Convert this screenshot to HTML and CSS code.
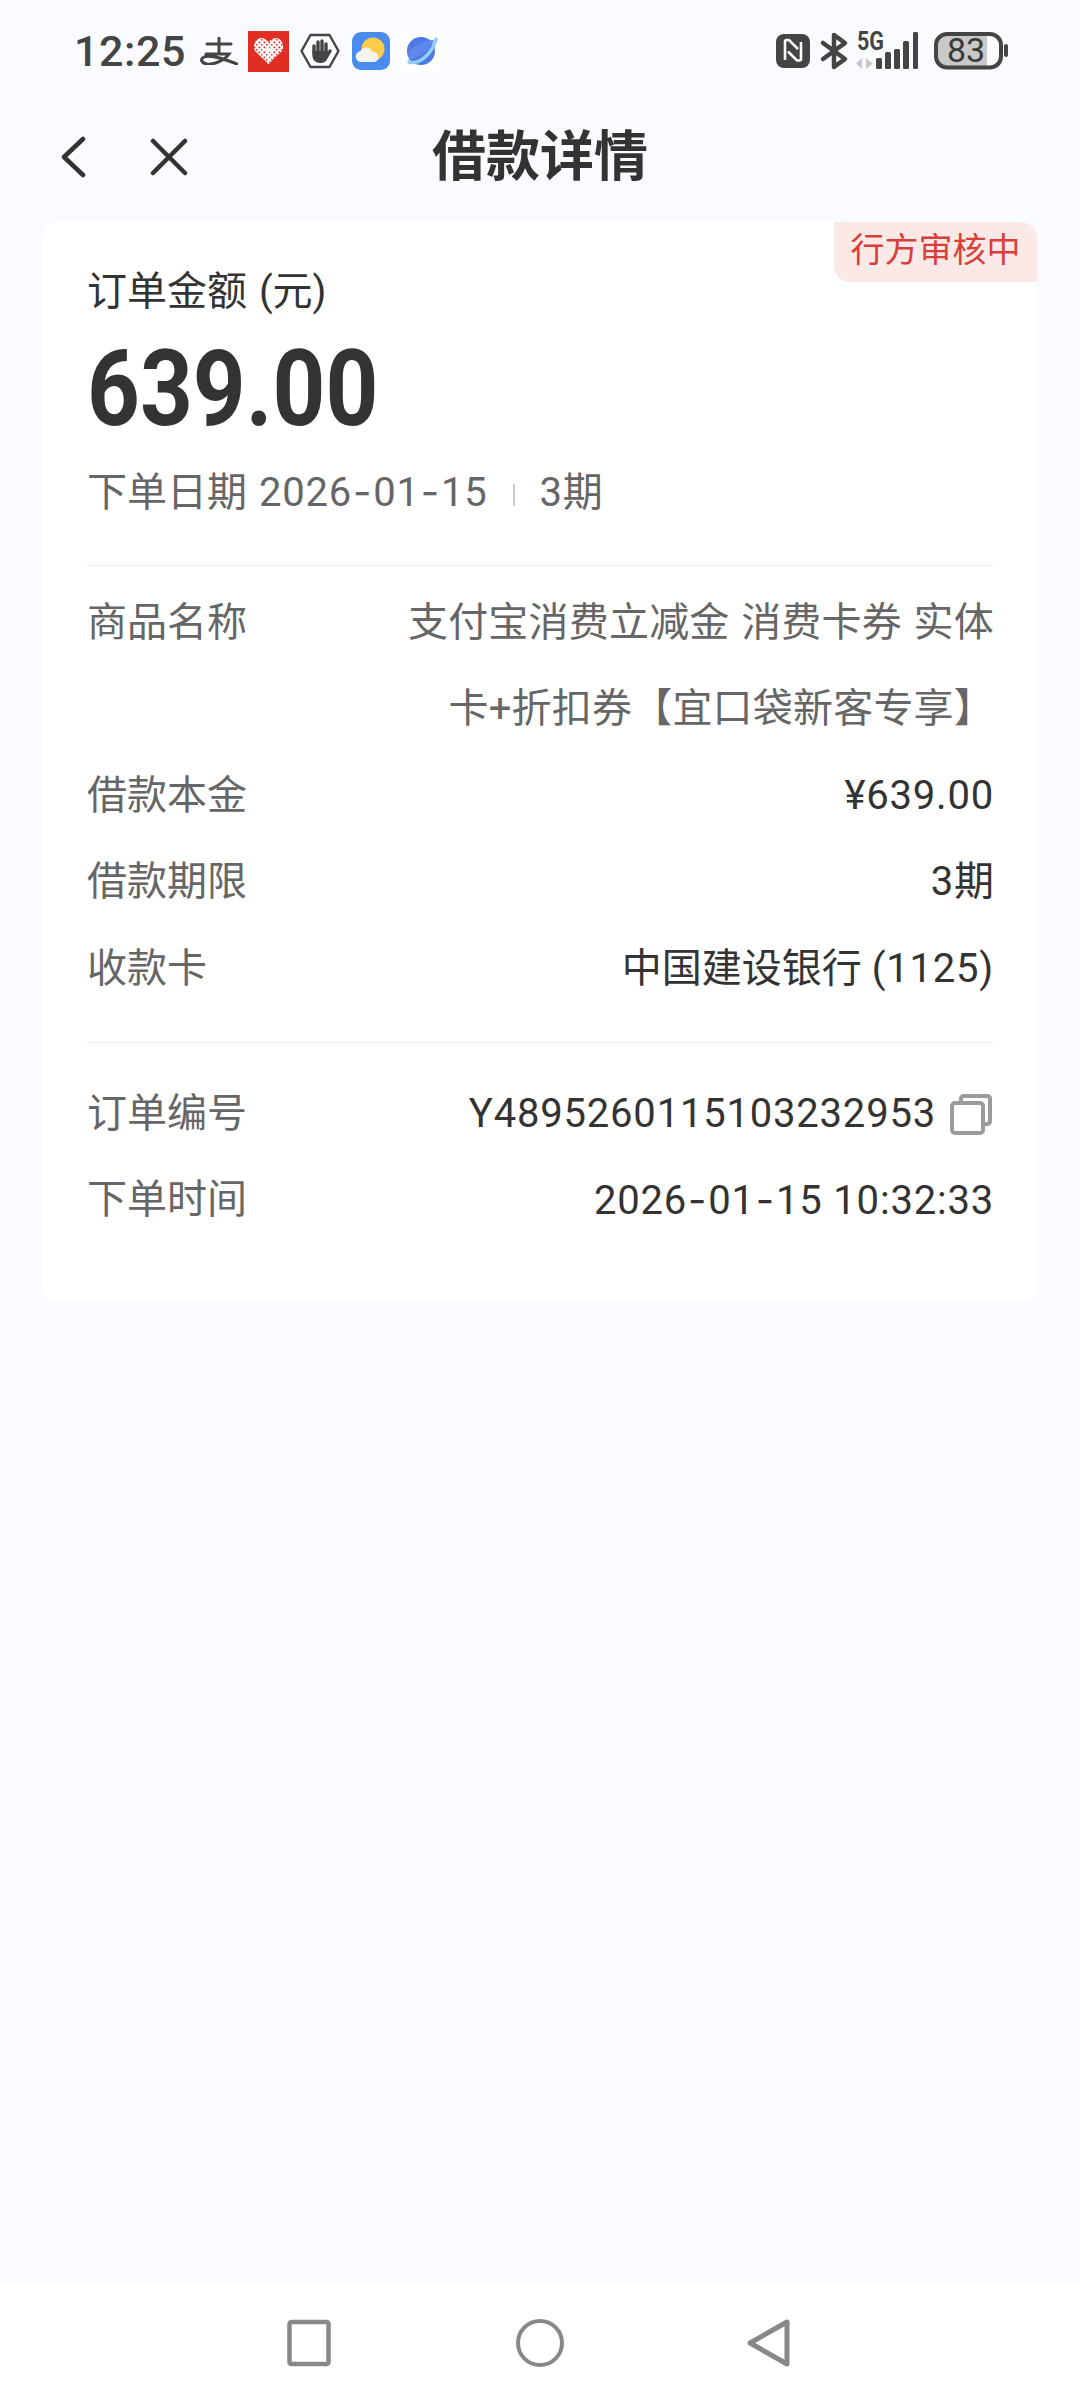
FILE: index.html
```html
<!DOCTYPE html>
<html lang="zh-CN">
<head>
<meta charset="utf-8">
<title>借款详情</title>
<link rel="stylesheet" href="styles.css">
</head>
<body>
<div class="phone">
  <div class="status">
    <div class="status-left">
      <span class="time">12:25</span>
      <svg class="ic ic-ali" viewBox="0 0 38 28" fill="none" stroke="#444" stroke-width="3" stroke-linecap="round"><path d="M7 7H31M19 1V17M6 17H29C25 23 14 28 7 27C1 26 0 22 4 20C10 17 24 22 37 27"/></svg>
      <svg class="ic ic-pdd" viewBox="0 0 41 41"><defs><pattern id="dots" width="5" height="5" patternUnits="userSpaceOnUse"><rect width="5" height="5" fill="#fff"/><rect x="0.500" y="0.500" width="1.800" height="1.800" fill="#e02e24"/><rect x="3" y="3" width="1.500" height="1.500" fill="#e02e24"/></pattern></defs><rect width="41" height="41" fill="#e02e24"/><path d="M20.500 33L7 20C4 14 8 7 13 7C16 7 19 9 20.500 11C22 9 25 7 28 7C33 7 37 14 34 20Z" fill="url(#dots)"/><path d="M20.500 14V33M14 19H27" stroke="#fff" stroke-width="1.500"/></svg>
      <svg class="ic ic-hand" viewBox="0 0 40 36"><path d="M1.500 18L10.500 2H29.500L38.500 18L29.500 34H10.500Z" fill="none" stroke="#444" stroke-width="2.400" stroke-linejoin="round"/><path d="M14 21V13M18 20V9M22 20V8M26 21V11M26.500 24L30 18" fill="none" stroke="#444" stroke-width="3.400" stroke-linecap="round"/><path d="M12.500 18H27.500V24C27.500 28 24 30 20 30C16 30 12.500 27 12.500 23Z" fill="#444"/></svg>
      <svg class="ic ic-weather" viewBox="0 0 38 38"><rect width="38" height="38" rx="9" fill="#4a8bf0"/><circle cx="21" cy="17" r="11.500" fill="#f9cc4a"/><path d="M10 30a5.500 5.500 0 0 1 -1.500 -11a6.500 6.500 0 0 1 12 1a5 5 0 0 1 2 10Z" fill="#f5f3ea"/></svg>
      <svg class="ic ic-planet" viewBox="0 0 40 41"><rect width="40" height="41" fill="#fff"/><circle cx="20" cy="20" r="14" fill="#4f79e6"/><path d="M7 21C14 13 24 9 33 9C27 20 17 28 8 29Z" fill="#6088ea"/><path d="M8 31C17 34 31 24 35 8" fill="none" stroke="#8fd0f7" stroke-width="3.500" stroke-linecap="round"/></svg>
    </div>
    <svg class="status-right" viewBox="0 -8 232 54">
      <rect x="0" y="2" width="34" height="34" rx="8" fill="#444"/>
      <path d="M9 28V9.500Q9 8 10.500 8H13L22 17M25 10V27Q25 28.500 23.500 28.500H21L12 19.500" fill="none" stroke="#fbfcff" stroke-width="2.600"/>
      <path d="M47 11L69 27L58 35V3L69 11L47 27" fill="none" stroke="#444" stroke-width="4.500" stroke-linejoin="round" stroke-linecap="round"/>
      <text class="five-g" x="81" y="18" textLength="27" lengthAdjust="spacingAndGlyphs">5G</text>
      <path d="M86 26V37L80 31.500ZM90 26V37L97 31.500Z" fill="#c9c9c9"/>
      <rect x="100" y="26" width="6" height="11" rx="1.500" fill="#444"/>
      <rect x="109" y="20" width="6" height="17" rx="1.500" fill="#444"/>
      <rect x="118" y="17" width="6" height="20" rx="1.500" fill="#444"/>
      <rect x="127" y="9" width="6" height="28" rx="1.500" fill="#444"/>
      <rect x="137" y="0" width="5" height="37" rx="1.500" fill="#444"/>
      <path d="M170 2.500H211V35H170A10 10 0 0 1 160 25V12.500A10 10 0 0 1 170 2.500Z" fill="#c8c8c8"/>
      <rect x="160" y="2" width="65" height="33.500" rx="11" fill="none" stroke="#444" stroke-width="4"/>
      <rect x="228" y="12" width="4" height="13" rx="2" fill="#444"/>
      <text class="batt" x="190" y="30" text-anchor="middle">83</text>
    </svg>
  </div>

  <header class="head">
    <svg class="head-back" viewBox="0 0 25 42" fill="none" stroke="#333" stroke-width="4.500" stroke-linecap="round" stroke-linejoin="round"><path d="M22 3L3 21L22 39"/></svg>
    <svg class="head-close" viewBox="0 0 38 38" fill="none" stroke="#333" stroke-width="4.500" stroke-linecap="round"><path d="M3 3L35 35M35 3L3 35"/></svg>
    <h1 class="title">借款详情</h1>
  </header>

  <main class="main">
    <section class="card">
      <span class="badge">行方审核中</span>
      <div class="amount-label">订单金额 (元)</div>
      <div class="amount">639.00</div>
      <div class="meta">
        <span>下单日期 <span class="num">2026<span class="dash">-</span>01<span class="dash">-</span>15</span></span>
        <i class="meta-sep"></i>
        <span><span class="num">3</span>期</span>
      </div>
      <div class="rows rows-first">
        <div class="row"><span class="k">商品名称</span><span class="v v-wrap">支付宝消费立减金 消费卡券 实体卡+折扣券【宜口袋新客专享】</span></div>
        <div class="row"><span class="k">借款本金</span><span class="v num">¥639.00</span></div>
        <div class="row"><span class="k">借款期限</span><span class="v"><span class="num">3</span>期</span></div>
        <div class="row"><span class="k">收款卡</span><span class="v">中国建设银行 <span class="num">(1125)</span></span></div>
      </div>
      <div class="rows rows-second">
        <div class="row"><span class="k">订单编号</span><span class="v v-copy"><span class="num">Y4895260115103232953</span>
          <svg class="copy" viewBox="0 0 42 41" fill="none" stroke="#9b9b9b" stroke-width="4" stroke-linejoin="round"><path d="M11 7V5Q11 2 14 2H37Q40 2 40 5V27Q40 30 37 30H33"/><rect x="2" y="9" width="31" height="30" rx="3"/></svg></span></div>
        <div class="row"><span class="k">下单时间</span><span class="v num">2026<span class="dash">-</span>01<span class="dash">-</span>15 10:32:33</span></div>
      </div>
    </section>
  </main>

  <nav class="nav">
    <svg class="nav-ic" viewBox="0 0 44 48" fill="none" stroke="#888" stroke-width="4.500" stroke-linejoin="round"><rect x="2.500" y="3" width="39" height="42" rx="2"/></svg>
    <svg class="nav-ic" viewBox="0 0 48 48" fill="none" stroke="#888" stroke-width="4"><circle cx="24" cy="24" r="22"/></svg>
    <svg class="nav-ic" viewBox="0 0 44 48" fill="none" stroke="#888" stroke-width="5" stroke-linejoin="round"><path d="M40 3V45L3 24Z"/></svg>
  </nav>
</div>
</body>
</html>
```

FILE: styles.css
```css
* { box-sizing: border-box; }
html, body { margin: 0; padding: 0; }
body {
  width: 1080px;
  height: 2400px;
  background: #fafbff;
  font-family: Roboto, "Noto Sans CJK SC", sans-serif;
  color: #333;
  overflow: hidden;
}
.phone { display: flex; flex-direction: column; height: 2400px; }

/* status bar */
.status {
  height: 100px;
  padding: 30px 72px 0 74px;
  display: flex;
  justify-content: space-between;
  align-items: flex-start;
}
.status-left { display: flex; align-items: center; height: 42px; }
.time {
  font-family: Roboto, sans-serif;
  font-weight: 500;
  font-size: 43px;
  line-height: 42px;
  color: #444;
  width: 126px;
  letter-spacing: 0.6px;
}
.ic { display: block; flex: none; }
.ic-ali { width: 38px; height: 28px; margin-right: 10px; }
.ic-pdd { width: 41px; height: 41px; margin-right: 11px; }
.ic-hand { width: 40px; height: 36px; margin-right: 12px; }
.ic-weather { width: 38px; height: 38px; margin-right: 11px; }
.ic-planet { width: 40px; height: 41px; }
.status-right { width: 232px; height: 54px; display: block; margin-top: -6px; }
.five-g { font-family: Roboto, sans-serif; font-weight: 700; font-size: 25px; fill: #444; }
.batt { font-family: Roboto, sans-serif; font-size: 34px; fill: #3a3a3a; }

/* header */
.head {
  height: 122px;
  position: relative;
  display: flex;
  align-items: center;
  justify-content: center;
}
.head-back { position: absolute; left: 61px; top: 36px; width: 25px; height: 42px; }
.head-close { position: absolute; left: 150px; top: 38px; width: 38px; height: 38px; }
.title {
  margin: 0 0 6px;
  font-size: 54px;
  line-height: 72px;
  font-weight: 700;
  color: #333;
}

/* card */
.main { flex: 1; padding: 0 43px 0 42px; }
.card {
  position: relative;
  height: 1080px;
  background: #fff;
  border-radius: 16px;
  padding: 43px 43px 0 45px;
}
.badge {
  position: absolute;
  top: 0;
  right: 0;
  width: 203px;
  height: 60px;
  background: #fbe9e8;
  color: #d8403a;
  font-size: 34px;
  line-height: 56px;
  text-align: center;
  border-radius: 0 16px 0 16px;
}
.num { letter-spacing: 0.8px; }
.dash { font-family: Inter, sans-serif; margin: 0 1px; }
.amount-label { font-size: 40px; line-height: 54px; color: #333; word-spacing: 2px; }
.amount {
  margin-top: 10px;
  font-weight: 700;
  font-size: 106px;
  line-height: 120px;
  color: #333;
  transform: scaleX(0.87);
  transform-origin: left center;
}
.meta {
  margin-top: 16px;
  display: flex;
  align-items: center;
  font-size: 40px;
  line-height: 54px;
  color: #666;
  word-spacing: 2px;
}
.meta-sep { width: 2px; height: 22px; background: #ccc; margin: 4px 25px 0; }
.rows-first {
  margin-top: 45px;
  border-top: 1px solid #f1f1f3;
  padding-top: 14px;
}
.rows-second {
  margin-top: 30px;
  border-top: 1px solid #f1f1f3;
  padding-top: 28px;
}
.row {
  display: flex;
  justify-content: space-between;
  font-size: 40px;
  line-height: 86.4px;
}
.k { flex: none; color: #666; }
.v { color: #333; text-align: right; }
.v-wrap { width: 606px; color: #666; word-spacing: 1.5px; letter-spacing: 0.2px; }
.v-copy { display: flex; align-items: center; }
.copy { width: 42px; height: 41px; margin-left: 14px; flex: none; margin-right: 2px; }

/* navigation */
.nav {
  height: 116px;
  background: #fff;
  display: flex;
  align-items: flex-start;
  padding: 35px 0 0 287px;
}
.nav-ic { display: block; height: 48px; flex: none; }
.nav-ic:nth-child(1) { width: 44px; margin-right: 185px; }
.nav-ic:nth-child(2) { width: 48px; margin-right: 183px; }
.nav-ic:nth-child(3) { width: 44px; }
```
